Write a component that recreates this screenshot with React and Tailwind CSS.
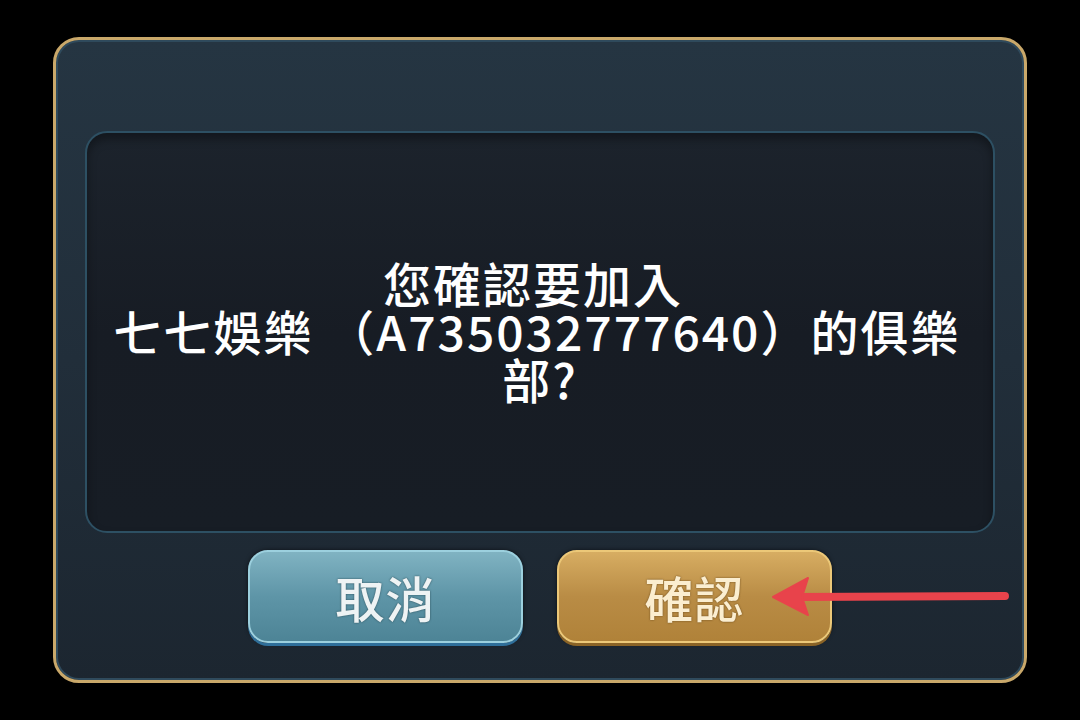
export default function App() {
  const font = { fontFamily: '"Noto Sans CJK TC", "Noto Sans CJK SC", "Noto Sans", sans-serif' };
  return (
    <div className="relative w-[1080px] h-[720px] bg-black overflow-hidden flex items-start justify-center pt-[37px]" style={font}>
      <div className="w-[974px] h-[646px] rounded-[26px] border-[3px] border-[#c9a86a] bg-gradient-to-b from-[#253542] via-[#212e3a] to-[#1c2630] shadow-[inset_0_0_0_2px_#2f4a5c] flex flex-col items-center pt-[91px] px-[29px]">
        <div className="w-full h-[402px] rounded-[22px] border-2 border-[#2d5063] bg-gradient-to-b from-[#1c232c] via-[#171c24] to-[#171d25] shadow-[inset_0_6px_10px_rgba(0,0,0,0.35)] flex flex-col items-center justify-center pb-[4px]">
          <div className="text-white text-[48px] leading-[48px] font-medium text-center tracking-[2px]">
            <div className="pr-[14px]">您確認要加入</div>
            <div className="pr-[6px]">七七娛樂 （A735032777640）的俱樂</div>
            <div>部?</div>
          </div>
        </div>
        <div className="flex gap-[34px] mt-[17px]">
          <div className="w-[275px] h-[93px] rounded-[20px] border-2 border-[#9cd0de] bg-gradient-to-b from-[#80b3c2] via-[#5e95a7] to-[#4d8496] shadow-[0_3px_0_#2f6f9a,0_0_4px_rgba(0,0,0,0.6)] flex items-center justify-center">
            <span className="text-[49px] font-medium text-[#eef3f4] tracking-[1px] [text-shadow:0_0_2px_rgba(30,60,70,0.9)]">取消</span>
          </div>
          <div className="w-[275px] h-[93px] rounded-[20px] border-2 border-[#ecc878] bg-gradient-to-b from-[#d7ad62] via-[#b98c45] to-[#b08239] shadow-[0_3px_0_#8a6326,0_0_4px_rgba(0,0,0,0.6)] flex items-center justify-center">
            <span className="text-[49px] font-medium text-[#fbeed0] tracking-[1px] [text-shadow:0_0_2px_rgba(90,60,20,0.9)]">確認</span>
          </div>
        </div>
      </div>
      <svg className="absolute left-0 top-0" width="1080" height="720" viewBox="0 0 1080 720">
        <line x1="800" y1="597" x2="1005" y2="596" stroke="#e8434b" strokeWidth="8" strokeLinecap="round" />
        <path d="M773 597 L808 578 L802 597 L808 615 Z" fill="#e8434b" stroke="#e8434b" strokeWidth="2" strokeLinejoin="round" />
      </svg>
    </div>
  );
}
